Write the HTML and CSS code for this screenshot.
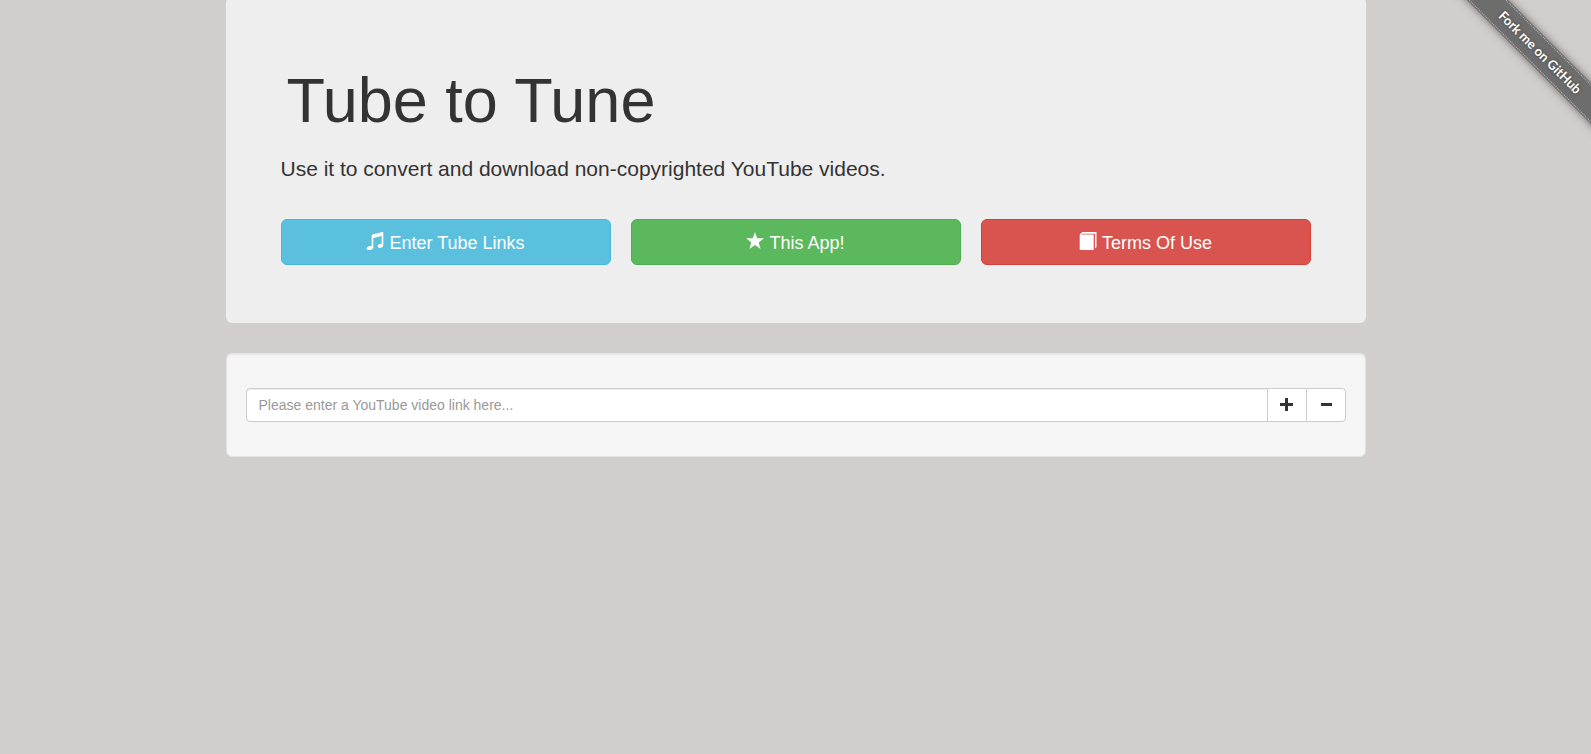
FILE: index.html
```html
<!DOCTYPE html>
<html lang="en">
<head>
<meta charset="utf-8">
<title>Tube to Tune</title>
<link rel="stylesheet" href="styles.css">
</head>
<body>
<div class="ribbon"><a class="ribbon-link" href="#github">Fork me on GitHub</a></div>
<main class="container">
  <header class="jumbotron">
    <h1 class="title">Tube to Tune</h1>
    <p class="lead">Use it to convert and download non-copyrighted YouTube videos.</p>
    <div class="actions">
      <button type="button" class="btn btn-info">
        <svg class="icon" viewBox="0 0 18 18" aria-hidden="true"><path d="M6.300 2.500 16.400 .1Q17.300 0 17.300 .7V13.200Q17.300 15.400 14.600 16Q11.600 16.200 11.600 14.200Q11.800 12.200 14 11.900Q15 11.700 15.700 11.900V4L7.300 6V15.500Q7 17.600 3.500 18Q.5 18 .6 16.200Q1 14.400 4 14Q5 13.900 5.700 14.100V3.300Q5.800 2.700 6.300 2.500Z"/></svg>
        Enter Tube Links
      </button>
      <button type="button" class="btn btn-success">
        <svg class="icon" viewBox="0 0 18 18" aria-hidden="true"><path d="M9 0 11.200 6.300H18L12.700 10.500 14.600 17 9 13 3.400 17 5.300 10.500 0 6.300H6.800Z"/></svg>
        This App!
      </button>
      <button type="button" class="btn btn-danger">
        <svg class="icon" viewBox="0 0 18 18" aria-hidden="true"><path d="M3.200 0H17.500V15.300L16 16.500V1.700H3L2.200 2.600H14.700V18H.7V2.500Z"/></svg>
        Terms Of Use
      </button>
    </div>
  </header>
  <form class="well">
    <div class="input-group">
      <input class="link-input" type="text" aria-label="YouTube video link" placeholder="Please enter a YouTube video link here...">
      <button type="button" class="addon" aria-label="Add link"><svg class="sign" viewBox="0 0 14 14" aria-hidden="true"><path d="M5 0H8V5H13V8H8V13H5V8H0V5H5Z"/></svg></button>
      <button type="button" class="addon addon-last" aria-label="Remove link"><svg class="sign" viewBox="0 0 14 14" aria-hidden="true"><path d="M2 5H13V8H2Z"/></svg></button>
    </div>
  </form>
</main>
</body>
</html>
```
FILE: styles.css
```css
* { box-sizing: border-box; }
body {
  margin: 0;
  background: #d2cecd;
  color: #333;
  font-family: "Liberation Sans", Arial, sans-serif;
  font-size: 14px;
  overflow-x: hidden;
}
.container {
  max-width: 1170px;
  margin: -3px auto 0;
  padding: 0 15px;
}
.jumbotron {
  padding: 69px 55px 58px;
  margin-bottom: 30px;
  border-radius: 6px;
  background: #eee;
}
.title {
  margin: 0 0 19px 6px;
  font-size: 63px;
  font-weight: 400;
  line-height: 69px;
}
.lead {
  margin: 0 0 36px;
  font-size: 21px;
  line-height: 29px;
}
.actions {
  display: grid;
  grid-template-columns: repeat(3, 1fr);
  gap: 20px;
}
.btn {
  display: flex;
  align-items: center;
  justify-content: center;
  gap: 5px;
  padding: 11px 16px 9px;
  border: 1px solid;
  border-radius: 6px;
  color: #fff;
  font: 18px/24px "Liberation Sans", Arial, sans-serif;
}
.btn-info { background: #5bc0de; border-color: #46b8da; }
.btn-success { background: #5cb85c; border-color: #4cae4c; }
.btn-danger { background: #d9534f; border-color: #d43f3a; }
.icon {
  width: 18px;
  height: 18px;
  margin-bottom: 5px;
  fill: currentColor;
}
.well {
  padding: 34px 19px;
  border: 1px solid #e3e3e3;
  border-radius: 6px;
  background: #f5f5f5;
  box-shadow: inset 0 1px 1px rgba(0, 0, 0, .05);
}
.input-group { display: flex; }
.link-input {
  flex: 1;
  min-width: 0;
  height: 34px;
  padding: 6px 12px;
  border: 1px solid #ccc;
  border-radius: 4px 0 0 4px;
  background: #fff;
  box-shadow: inset 0 1px 1px rgba(0, 0, 0, .075);
  font: 14px/20px "Liberation Sans", Arial, sans-serif;
}
.link-input::placeholder { color: #999; opacity: 1; }
.addon {
  display: flex;
  align-items: center;
  justify-content: center;
  width: 40px;
  margin-left: -1px;
  padding: 0;
  border: 1px solid #ccc;
  background: #fff;
}
.addon-last { border-radius: 0 4px 4px 0; }
.sign {
  width: 14px;
  height: 14px;
  fill: #333;
}
.ribbon {
  position: absolute;
  top: 0;
  right: 0;
  width: 149px;
  height: 149px;
  overflow: hidden;
}
.ribbon-link {
  position: absolute;
  top: 38px;
  left: -12px;
  width: 220px;
  padding: 1px 0;
  background: #6d6d6d;
  box-shadow: 0 0 8px rgba(0, 0, 0, .5);
  color: #fff;
  font: bold 13px/27px Lato, sans-serif;
  text-align: center;
  text-decoration: none;
  text-shadow: 0 0 3px rgba(0, 0, 0, .5);
  transform: rotate(45deg);
}
.ribbon-link::before {
  content: "";
  position: absolute;
  inset: 1px 0;
  border: 1px dotted #bbb;
  border-width: 1px 0;
}
```
